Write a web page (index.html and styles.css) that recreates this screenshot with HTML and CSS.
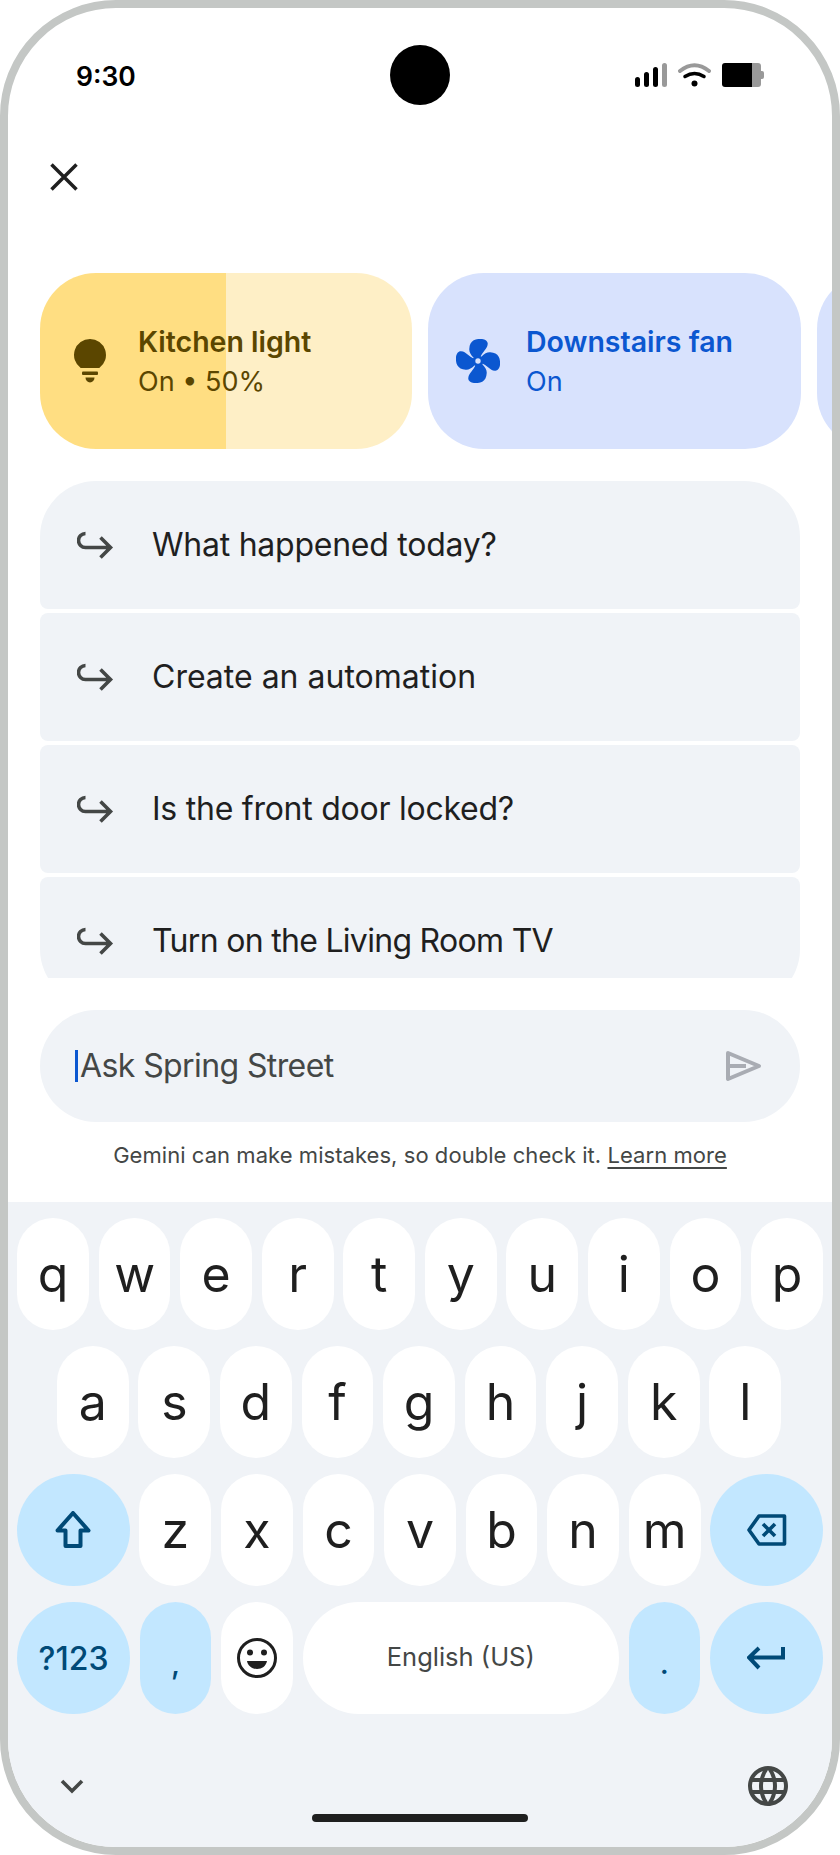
FILE: index.html
```html
<!DOCTYPE html>
<html lang="en">
  <head>
    <meta charset="UTF-8" />
    <title>Ask Spring Street</title>
    <link rel="stylesheet" href="styles.css">
  </head>
  <body>
    <div class="phone">
      <!-- STATUS BAR -->
      <div class="statusbar">
        <span class="time">9:30</span>
        <div class="camera"></div>
        <div class="status-icons">
          <svg width="32" height="24" viewBox="0 0 32 24">
            <rect x="0" y="14" width="5" height="10" rx="2.500" fill="#000" />
            <rect x="9" y="9" width="5" height="15" rx="2.500" fill="#000" />
            <rect x="18" y="4" width="5" height="20" rx="2.500" fill="#000" />
            <rect x="27" y="0" width="5" height="24" rx="2.500" fill="#999" />
          </svg>
          <svg width="33" height="24" viewBox="0 0 33 24" fill="none">
            <path d="M2 8Q16.500 -3.500 31 8" stroke="#999" stroke-width="4" stroke-linecap="round" />
            <path d="M7 13.500Q16.500 7.500 26 13.500" stroke="#000" stroke-width="3.500" stroke-linecap="round" />
            <circle cx="16.500" cy="20.500" r="3" fill="#000" />
          </svg>
          <svg width="42" height="24" viewBox="0 0 42 24">
            <path d="M3 0H30V24H3A3 3 0 0 1 0 21V3A3 3 0 0 1 3 0Z" fill="#000" />
            <path d="M30 0H36A3 3 0 0 1 39 3V21A3 3 0 0 1 36 24H30Z" fill="#999" />
            <path d="M39 8H40A2 2 0 0 1 42 10V14A2 2 0 0 1 40 16H39Z" fill="#999" />
          </svg>
        </div>
      </div>

      <div class="toprow">
        <svg width="28" height="28" viewBox="0 0 28 28" fill="none">
          <path d="M1.500 1.500L26.500 26.500M26.500 1.500L1.500 26.500" stroke="#1f1f1f" stroke-width="3.500" />
        </svg>
      </div>

      <!-- Device cards -->
      <div class="cards">
        <div class="card card-light">
          <svg width="34" height="44" viewBox="0 0 34 44" fill="#5b4600">
            <path d="M17 0A16 16 0 0 1 26.300 29H7.700A16 16 0 0 1 17 0Z" />
            <rect x="9" y="32.500" width="16" height="3.500" rx="1" />
            <path d="M12.500 38.500H21.500A4.500 5 0 0 1 12.500 38.500Z" />
          </svg>
          <div class="card-text">
            <div class="card-title">Kitchen light</div>
            <div>On • 50%</div>
          </div>
        </div>
        <div class="card card-fan">
          <svg width="44" height="44" viewBox="0 0 44 44" fill="#0b57d0">
            <path id="blade" d="M22 22L17.700 18.700C14.500 15.500 13 12.500 13.300 9.700C13.500 5.500 15 3 17.700 1.300C20 0 23.500 -0.300 26 0C29.500 0.500 32 2.500 31.700 5C31.500 8 30 9.500 28.700 11.300C27 13.500 25.500 15.500 24.300 18Z" />
            <use href="#blade" transform="rotate(90 22 22)" />
            <use href="#blade" transform="rotate(180 22 22)" />
            <use href="#blade" transform="rotate(270 22 22)" />
            <circle cx="22" cy="22" r="5.500" />
            <circle cx="22" cy="22" r="2.700" fill="#d8e2fd" />
          </svg>
          <div class="card-text">
            <div class="card-title">Downstairs fan</div>
            <div>On</div>
          </div>
        </div>
        <div class="card card-fan"></div>
      </div>

      <!-- Suggestions -->
      <div class="suggestions">
        <div class="suggestion first">
          <svg class="reply" width="38" height="30" viewBox="0 0 38 30" fill="none">
            <path d="M8.500 2.500A7 7 0 0 0 8.500 16.500H33M23.500 6.500L33.500 16.500L23.500 26.500" />
          </svg>
          <span>What happened today?</span>
        </div>
        <div class="suggestion">
          <svg class="reply" width="38" height="30" viewBox="0 0 38 30" fill="none">
            <path d="M8.500 2.500A7 7 0 0 0 8.500 16.500H33M23.500 6.500L33.500 16.500L23.500 26.500" />
          </svg>
          <span class="loose">Create an automation</span>
        </div>
        <div class="suggestion">
          <svg class="reply" width="38" height="30" viewBox="0 0 38 30" fill="none">
            <path d="M8.500 2.500A7 7 0 0 0 8.500 16.500H33M23.500 6.500L33.500 16.500L23.500 26.500" />
          </svg>
          <span>Is the front door locked?</span>
        </div>
        <div class="suggestion last">
          <svg class="reply" width="38" height="30" viewBox="0 0 38 30" fill="none">
            <path d="M8.500 2.500A7 7 0 0 0 8.500 16.500H33M23.500 6.500L33.500 16.500L23.500 26.500" />
          </svg>
          <span class="tight">Turn on the Living Room TV</span>
        </div>
      </div>

      <!-- Ask box -->
      <div class="askbox">
        <span class="caret"></span>
        <span class="ask-text">Ask Spring Street</span>
        <svg width="36" height="32" viewBox="0 0 36 32" fill="none">
          <path d="M2 3L33 16L2 29ZM2 16H20" stroke="#a9acb3" stroke-width="4" stroke-linejoin="round" />
        </svg>
      </div>
      <div class="disclaimer">
        Gemini can make mistakes, so double check it. <a href="#">Learn more</a>
      </div>

      <!-- Keyboard -->
      <div class="keyboard">
        <div class="keyrow">
          <div class="key">q</div><div class="key">w</div><div class="key">e</div><div class="key">r</div><div class="key">t</div>
          <div class="key">y</div><div class="key">u</div><div class="key">i</div><div class="key">o</div><div class="key">p</div>
        </div>
        <div class="keyrow home-row">
          <div class="key">a</div><div class="key">s</div><div class="key">d</div><div class="key">f</div><div class="key">g</div>
          <div class="key">h</div><div class="key">j</div><div class="key">k</div><div class="key">l</div>
        </div>
        <div class="keyrow">
          <div class="key wide accent">
            <svg width="36" height="38" viewBox="0 0 36 38" fill="none">
              <path d="M18 2L33.500 19.500H25.500V35H10.500V19.500H2.500Z" stroke="#004a77" stroke-width="4" stroke-linejoin="round" />
            </svg>
          </div>
          <div class="key">z</div><div class="key">x</div><div class="key">c</div><div class="key">v</div>
          <div class="key">b</div><div class="key">n</div><div class="key">m</div>
          <div class="key wide accent">
            <svg width="40" height="32" viewBox="0 0 40 32" fill="none" stroke="#004a77" stroke-width="3.600">
              <path d="M12 2H37.500V30H12L2 16Z" stroke-linejoin="round" />
              <path d="M16 10L28 22M28 10L16 22" />
            </svg>
          </div>
        </div>
        <div class="keyrow">
          <div class="key wide accent num">?123</div>
          <div class="key accent punct">,</div>
          <div class="key">
            <svg width="40" height="40" viewBox="0 0 40 40" fill="none">
              <circle cx="20" cy="20" r="18.500" stroke="#1f1f1f" stroke-width="3" />
              <circle cx="13" cy="14.500" r="3" fill="#1f1f1f" />
              <circle cx="27" cy="14.500" r="3" fill="#1f1f1f" />
              <path d="M10 23H30C29 28 25 31 20 31C15 31 11 28 10 23Z" fill="#1f1f1f" />
            </svg>
          </div>
          <div class="key space"><span>English (US)</span></div>
          <div class="key accent punct">.</div>
          <div class="key wide accent">
            <svg width="38" height="24" viewBox="0 0 38 24" fill="none">
              <path d="M36 1V11.500H3M12 2L2 11.500L12 22" stroke="#004a77" stroke-width="4" />
            </svg>
          </div>
        </div>
        <div class="kb-bottom">
          <svg width="24" height="16" viewBox="0 0 24 16" fill="none">
            <path d="M2 3L12 13L22 3" stroke="#444746" stroke-width="3.600" />
          </svg>
          <div class="home-pill"></div>
          <svg width="48" height="48" viewBox="0 0 24 24" fill="#444746">
            <path d="M11.990 2C6.470 2 2 6.480 2 12s4.470 10 9.990 10C17.520 22 22 17.520 22 12S17.520 2 11.990 2zm6.930 6h-2.950c-.320-1.250-.780-2.450-1.380-3.560 1.840.630 3.370 1.910 4.330 3.560zM12 4.040c.830 1.200 1.480 2.530 1.910 3.960h-3.820c.430-1.430 1.080-2.760 1.910-3.960zM4.260 14C4.100 13.360 4 12.690 4 12s.100-1.360.260-2h3.380c-.080.660-.140 1.320-.140 2s.060 1.340.140 2H4.260zm.820 2h2.950c.320 1.250.780 2.450 1.380 3.560-1.840-.630-3.370-1.900-4.330-3.560zm2.950-8H5.080c.960-1.660 2.490-2.930 4.330-3.560C8.810 5.550 8.350 6.750 8.030 8zM12 19.960c-.830-1.200-1.480-2.530-1.910-3.960h3.820c-.430 1.430-1.080 2.760-1.910 3.960zM14.340 14H9.660c-.090-.660-.160-1.320-.160-2s.070-1.350.160-2h4.680c.090.650.160 1.320.160 2s-.070 1.340-.160 2zm.250 5.560c.600-1.110 1.060-2.310 1.380-3.560h2.950c-.960 1.650-2.490 2.930-4.330 3.560zM16.360 14c.080-.660.140-1.320.140-2s-.060-1.340-.140-2h3.380c.160.640.260 1.310.260 2s-.100 1.360-.260 2h-3.380z" />
          </svg>
        </div>
      </div>
    </div>
  </body>
</html>
```

FILE: styles.css
```css
* {
  box-sizing: border-box;
}

body {
  margin: 0;
  background: #fff;
  font-family: "Inter", sans-serif;
  color: #1f1f1f;
}

.phone {
  position: relative;
  width: 840px;
  height: 1855px;
  border: 8px solid #c4c7c5;
  border-radius: 116px;
  background: #fff;
  overflow: hidden;
  display: flex;
  flex-direction: column;
}

/* status bar */
.statusbar {
  height: 132px;
  flex: none;
  padding: 56px 68px 0 68px;
  display: flex;
  justify-content: space-between;
  align-items: flex-start;
}

.time {
  font-size: 26.5px;
  font-weight: 600;
  line-height: 24px;
  color: #000;
}

.status-icons {
  display: flex;
  gap: 11px;
  margin-top: -1px;
}

.camera {
  position: absolute;
  top: 37px;
  left: 382px;
  width: 60px;
  height: 60px;
  border-radius: 50%;
  background: #000;
}

.status-icons svg {
  display: block;
}

.toprow {
  height: 133px;
  flex: none;
  padding: 23px 0 0 42px;
}

/* device cards */
.cards {
  flex: none;
  display: flex;
  gap: 16px;
  padding-left: 32px;
}

.card {
  flex: none;
  width: 373px;
  height: 176px;
  border-radius: 56px;
  display: flex;
  align-items: center;
  font-size: 27px;
  line-height: 40px;
}

.card-light {
  width: 372px;
  background: linear-gradient(90deg, #ffde82 50%, #feefc6 50%);
  color: #5b4600;
  padding-left: 33px;
  gap: 31px;
}

.card-fan {
  background: #d8e2fd;
  color: #0b57d0;
  padding-left: 28px;
  gap: 26px;
}

.card-text {
  padding-top: 2px;
}

.card-title {
  font-size: 28.5px;
  font-weight: 600;
}

/* suggestions */
.suggestions {
  flex: none;
  margin: 32px 32px 0;
  height: 497px;
  overflow: hidden;
  display: flex;
  flex-direction: column;
  gap: 4px;
}

.suggestion {
  flex: none;
  height: 128px;
  background: #f0f3f7;
  border-radius: 8px;
  display: flex;
  align-items: center;
  padding-left: 37px;
  padding-bottom: 2px;
  gap: 37px;
  font-size: 32px;
  letter-spacing: -0.25px;
  color: #1f1f1f;
}

.suggestion .loose {
  letter-spacing: 0;
}

.suggestion .tight {
  letter-spacing: -0.7px;
}

.suggestion.first {
  border-radius: 56px 56px 8px 8px;
}

.suggestion.last {
  border-radius: 8px 8px 56px 56px;
}

.reply {
  margin-top: 3px;
}

.reply path {
  stroke: #444746;
  stroke-width: 3.6;
}

/* ask box */
.askbox {
  flex: none;
  margin: 32px 32px 0;
  height: 112px;
  border-radius: 56px;
  background: #f0f3f7;
  display: flex;
  align-items: center;
  padding-left: 35px;
  padding-right: 38px;
}

.caret {
  width: 3px;
  height: 32px;
  background: #0b57d0;
  margin-right: 2px;
}

.ask-text {
  flex: 1;
  font-size: 32px;
  letter-spacing: -0.6px;
  color: #444746;
  margin-top: -2px;
}

.disclaimer {
  flex: none;
  height: 80px;
  padding-top: 18px;
  text-align: center;
  font-size: 22px;
  letter-spacing: 0.05px;
  line-height: 30px;
  color: #444746;
}

.disclaimer a {
  color: #444746;
  text-decoration: underline;
  text-decoration-thickness: 2px;
  text-underline-offset: 4px;
}

/* keyboard */
.keyboard {
  flex: 1;
  background: #f0f3f7;
  padding: 16px 9px 0;
  display: flex;
  flex-direction: column;
  gap: 16px;
}

.keyrow {
  display: flex;
  justify-content: center;
  gap: 9.75px;
}

.home-row {
  padding-right: 2px;
}

.key {
  flex: none;
  width: 71.8px;
  height: 112px;
  border-radius: 36px;
  background: #fff;
  display: flex;
  align-items: center;
  justify-content: center;
  font-size: 50px;
  color: #1f1f1f;
}

.key.wide {
  width: 112.7px;
  border-radius: 56px;
}

.key.accent {
  background: #c2e7ff;
  color: #004a77;
}

.key.num {
  font-size: 32px;
  font-weight: 500;
}

.key.punct {
  font-size: 30px;
  font-weight: 500;
  padding-top: 10px;
}

.key.space {
  width: 316px;
  border-radius: 56px;
  font-size: 25.5px;
  color: #444746;
}

.key.space span {
  margin-top: -4px;
}

.kb-bottom {
  position: relative;
  flex: 1;
  display: flex;
  justify-content: space-between;
  align-items: flex-start;
  padding: 48px 31px 0 43px;
}

.kb-bottom svg {
  display: block;
}

.kb-bottom svg:last-child {
  margin-top: -16px;
}

.home-pill {
  position: absolute;
  left: 295px;
  top: 84px;
  width: 216px;
  height: 8px;
  border-radius: 4px;
  background: #1f1f1f;
}
```
